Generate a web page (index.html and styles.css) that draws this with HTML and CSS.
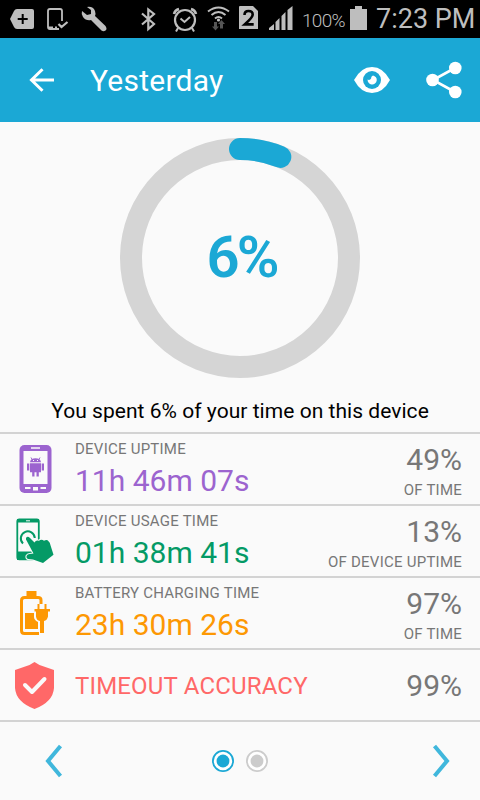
FILE: index.html
```html
<!DOCTYPE html>
<html lang="en">
<head>
<meta charset="utf-8">
<title>Yesterday</title>
<link rel="stylesheet" href="styles.css">
</head>
<body>
<div class="screen">
  <div class="status">
    <svg class="notif" width="120" height="38" viewBox="0 0 120 38">
      <path fill="#bebebe" d="M17 9h15q2 0 2 2v16q0 2-2 2H17q-2 0-3-2l-4-8 4-8q1-2 3-2z"/>
      <path stroke="#000" stroke-width="2" d="M22.700 14v10M17.700 19h10"/>
      <path fill="none" stroke="#bebebe" stroke-width="1.800" d="M62 21V11q0-2-2-2H50q-2 0-2 2v16q0 2 2 2h9"/>
      <path fill="none" stroke="#bebebe" stroke-width="2.200" d="M48 27.500h5m2 0h2M58.500 24l3 3 6-5"/>
      <path fill="#bebebe" d="M87 7q6-1 8 4 1 3 0 5l10.500 10q2 3 0 4.500-2 1.500-4 0L91 20q-5 1-8-3-2-3-1-6l5 4 4-1v-4z"/>
    </svg>
    <svg width="160" height="38" viewBox="138 0 160 38">
      <path fill="none" stroke="#bebebe" stroke-width="2.200" d="M142 13.500l12 10.500-5.700 5V9.500l5.700 4.500-12 10.500"/>
      <g fill="none" stroke="#bebebe">
        <circle cx="185" cy="20" r="10" stroke-width="2.200"/>
        <path stroke-width="2" d="M180.500 18.500l4 3.500 5.500-5M178 28l-2 3.500M192 28l2 3.500"/>
        <path stroke-width="2.600" d="M174 14q1-4 5-5M196 14q-1-4-5-5"/>
        <path stroke-width="2" d="M208 11.500q10.500-8 21 0M211.500 15q7-6 14 0M215 18.500q3.500-3 7 0"/>
      </g>
      <circle cx="218.500" cy="20" r="1.600" fill="#bebebe"/>
      <path fill="#555" d="M214 22h3v4.500h2l-3.500 4-3.500-4h2zM220 28.500h3V24h2l-3.500-4-3.500 4h2z"/>
      <path fill="#bebebe" d="M240 6h13l5 5v18h-19V7q0-1 1-1z"/>
      <path fill="none" stroke="#000" stroke-width="2.600" d="M244.500 15q0-4 4-4 4.200 0 4.200 3.700 0 2.500-8 9.700h9"/>
      <path fill="#bebebe" d="M269 30v-2l5-4v6zM275.500 30v-8l4-4v12zM281.500 30V16l4-4v18zM287.500 30V10l5-4v24z"/>
    </svg>
    <span class="charge">100%</span>
    <svg class="battery" width="17" height="25" viewBox="0 0 17 25"><path fill="#bebebe" d="M5 0h7v3h5v21H0V3h5z"/></svg>
    <span class="clock">7:23 PM</span>
  </div>

  <header class="bar">
    <svg class="back" width="26" height="24" viewBox="0 0 26 24"><path fill="none" stroke="#fff" stroke-width="3" d="M25 12H3M13.500 1.200L2.500 12l11 10.800"/></svg>
    <h1>Yesterday</h1>
    <svg class="eye" width="36" height="28" viewBox="0 0 36 28">
      <path fill="#fff" d="M0 14Q7 1 18 1t18 13q-7 13-18 13T0 14z"/>
      <circle cx="18" cy="14" r="9" fill="#1ba8d5"/>
      <path fill="#fff" d="M19 9.400A4.600 4.600 0 1 1 13.600 13.500Q15 14.500 16.500 13.300 17.500 12.500 17.300 11 17.800 10 19 9.400z"/>
    </svg>
    <svg width="36" height="38" viewBox="0 0 36 38">
      <path fill="none" stroke="#fff" stroke-width="2.600" d="M29 7L7 19l22 12"/>
      <g fill="#fff"><circle cx="29.300" cy="7" r="6.300"/><circle cx="6.500" cy="19" r="6.300"/><circle cx="29.300" cy="31" r="6.300"/></g>
    </svg>
  </header>

  <section class="summary">
    <div class="ring">
      <svg width="240" height="240" viewBox="0 0 240 240" fill="none" stroke-width="22">
        <circle cx="120" cy="120" r="109" stroke="#d5d5d5"/>
        <path d="M120 11A109 109 0 0 1 160.300 18.900" stroke="#1ba8d5" stroke-linecap="round"/>
      </svg>
      <strong>6%</strong>
    </div>
    <p>You spent 6% of your time on this device</p>
  </section>

  <main>
    <div class="row purple">
      <svg width="44" height="56" viewBox="12 441 44 56">
        <rect x="19.500" y="445" width="32" height="48" rx="5" fill="#9c64cf"/>
        <path fill="#fafafa" d="M23.500 451h24v33h-24zM31 447.300h9v1.500h-9zM25 487h5.500v2H25zM33 487h5v3.500h-5zM40.500 487H46v2h-5.500z"/>
        <path fill="#9c64cf" d="M30 462.300q.5-4 5.500-4t5.500 4zM30 463.300h11v9h-2.200v4.200h-2.300v-4.200h-2v4.200h-2.300v-4.200H30zM27 463.500h2.300v7H27zM41.700 463.500H44v7h-2.300z"/>
        <path stroke="#9c64cf" d="M32.500 460l-1.500-2.500M38.500 460l1.500-2.500"/>
        <path fill="#fafafa" d="M33 460h1v1h-1zM37 460h1v1h-1z"/>
      </svg>
      <div class="info"><span class="label">DEVICE UPTIME</span><span class="time">11h 46m 07s</span></div>
      <div class="share"><span class="pct">49%</span><span class="label">OF TIME</span></div>
    </div>
    <div class="row green">
      <svg width="44" height="56" viewBox="12 513 44 56">
        <rect x="17.300" y="519.300" width="21.500" height="40" rx="2" fill="none" stroke="#049a66" stroke-width="1.800"/>
        <path fill="#049a66" d="M17 519h22v3.500H17zM17 551.500h22v8.500H17z"/>
        <path fill="#fafafa" d="M26 520.300h4v1h-4z"/>
        <path fill="none" stroke="#049a66" stroke-width="2" d="M23 543.500a7 7 0 1 1 11.800-5.500"/>
        <path fill="#049a66" stroke="#fafafa" stroke-width="2" paint-order="stroke" d="M26 538q1.500-2.500 4 0l4.500 4.500q1.500-3 4.500-1.700 2.500-2.300 5 0 3-2 4.500.5 1.500 1 2 4l3 9.500-10.500 8.200-10-3.500-5-.5q-2-.5-1.500-3 1-2 3-2l4-.5-7.500-14z"/>
      </svg>
      <div class="info"><span class="label">DEVICE USAGE TIME</span><span class="time">01h 38m 41s</span></div>
      <div class="share"><span class="pct">13%</span><span class="label">OF DEVICE UPTIME</span></div>
    </div>
    <div class="row orange">
      <svg width="44" height="56" viewBox="12 585 44 56">
        <path fill="none" stroke="#fd9803" stroke-width="3" d="M41 604v-4q0-2.500-3-2.500H24.500q-3 0-3 3v30q0 3 3 3H39"/>
        <path fill="#fd9803" d="M26.500 591h10v5h-10zM25 613h9v4q0 3 4 5v7H25z"/>
        <path fill="#fd9803" d="M37.500 604h2v5h5v-5h2v5h3.500v2.500h-2v5q-1 4-4 4.500v12h-4v-12q-3.500-.5-4-4.500v-5h-1.500V609h3z"/>
      </svg>
      <div class="info"><span class="label">BATTERY CHARGING TIME</span><span class="time">23h 30m 26s</span></div>
      <div class="share"><span class="pct">97%</span><span class="label">OF TIME</span></div>
    </div>
    <div class="row red">
      <svg width="44" height="56" viewBox="12 657 44 56">
        <path fill="#ff6868" d="M34.500 662l5 3 14.500 5v18q-1 14-19.500 21Q16 702 15 688v-18l14.500-5z"/>
        <path fill="none" stroke="#fafafa" stroke-width="4" stroke-linecap="round" stroke-linejoin="round" d="M25 685l7 7 12.500-13"/>
      </svg>
      <span class="accuracy">TIMEOUT ACCURACY</span>
      <div class="share single"><span class="pct">99%</span></div>
    </div>
  </main>

  <footer>
    <svg width="18" height="34" viewBox="0 0 18 34"><path fill="none" stroke="#40b7dc" stroke-width="4" d="M15.500 2L3 17l12.500 15"/></svg>
    <div class="dots">
      <svg width="22" height="22" viewBox="0 0 22 22"><circle cx="11" cy="11" r="10.100" fill="#fff" stroke="#1ba8d5" stroke-width="1.800"/><circle cx="11" cy="11" r="6.400" fill="#1ba8d5"/></svg>
      <svg width="22" height="22" viewBox="0 0 22 22"><circle cx="11" cy="11" r="10.100" fill="#fff" stroke="#ccc" stroke-width="1.800"/><circle cx="11" cy="11" r="6.400" fill="#ccc"/></svg>
    </div>
    <svg width="18" height="34" viewBox="0 0 18 34"><path fill="none" stroke="#40b7dc" stroke-width="4" d="M2.500 2L15 17 2.500 32"/></svg>
  </footer>
</div>
</body>
</html>
```
FILE: styles.css
```css
* { box-sizing: border-box; margin: 0; padding: 0; }
body { background: #fafafa; font-family: Roboto, sans-serif; }
svg { display: block; flex: none; }
.screen { width: 480px; height: 800px; display: flex; flex-direction: column; overflow: hidden; }
.status { height: 38px; background: #000; color: #bebebe; display: flex; align-items: center; white-space: nowrap; }
.notif { margin-right: 18px; }
.charge { width: 52px; padding-left: 4px; font-size: 19px; font-weight: 300; letter-spacing: -0.7px; padding-top: 2px; }
.battery { margin-bottom: 1px; }
.clock { margin-left: 9px; font-size: 27px; line-height: 38px; letter-spacing: 0; }
.bar { height: 84px; background: #1ba8d5; color: #fff; display: flex; align-items: center; padding: 0 18px 0 29px; }
.back { margin-right: 35px; }
.bar h1 { flex: 1; font-size: 30px; font-weight: 400; line-height: 36px; letter-spacing: 0.25px; padding-top: 1px; }
.eye { margin-right: 36px; }
.summary { height: 310px; padding-top: 16px; }
.ring { width: 240px; height: 240px; margin: 0 auto; display: grid; place-items: center; }
.ring > * { grid-area: 1 / 1; }
.ring strong { color: #1ba8d5; font-size: 58px; line-height: 68px; font-weight: 600; letter-spacing: -3px; padding: 0 0 2px 3px; }
.summary p { margin-top: 19px; color: #000; font-size: 21px; line-height: 28px; letter-spacing: 0.04px; text-align: center; }
.row { height: 72px; border-top: 2px solid #d3d3d3; display: flex; align-items: center; padding: 0 18px 0 12px; }
.info { margin-left: 19px; height: 70px; padding-top: 6px; }
.info span, .share span { display: block; white-space: nowrap; }
.label { color: #777; font-size: 15px; line-height: 18px; letter-spacing: 0.24px; }
.time { font-size: 30px; line-height: 36px; margin-top: 5px; }
.share { margin-left: auto; height: 70px; padding-top: 8px; text-align: right; color: #777; }
.share .label { margin-top: 3px; }
.pct { font-size: 30px; line-height: 36px; }
.share.single { padding-top: 18px; }
.accuracy { margin-left: 19px; padding-top: 2px; font-size: 24px; letter-spacing: 0.17px; }
.purple .time { color: #9c64cf; }
.green .time { color: #049a66; }
.orange .time { color: #fd9803; }
.accuracy { color: #ff6868; }
footer { height: 80px; border-top: 2px solid #d3d3d3; display: flex; align-items: center; padding: 0 30px 0 45px; }
.dots { display: flex; gap: 12px; margin: 0 auto 0 149px; }
```
